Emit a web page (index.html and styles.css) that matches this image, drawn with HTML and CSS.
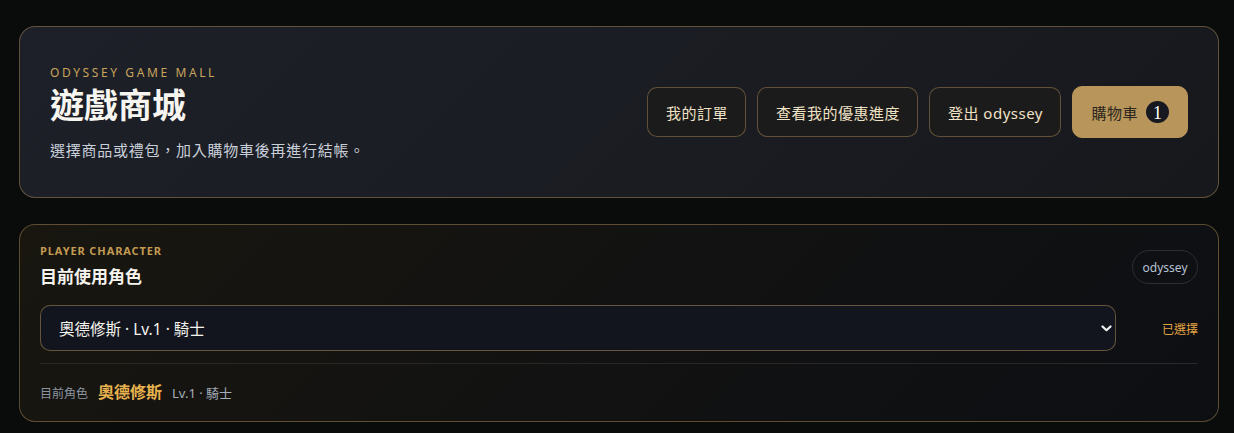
FILE: index.html
```html
<!DOCTYPE html>
<html lang="zh-Hant">
<head>
<meta charset="utf-8">
<title>遊戲商城</title>
<link rel="stylesheet" href="styles.css">
</head>
<body>
<main class="page">
  <header class="hero">
    <div class="hero-text">
      <div class="eyebrow">ODYSSEY GAME MALL</div>
      <h1 class="title">遊戲商城</h1>
      <p class="subtitle">選擇商品或禮包，加入購物車後再進行結帳。</p>
    </div>
    <nav class="actions">
      <button class="btn">我的訂單</button>
      <button class="btn">查看我的優惠進度</button>
      <button class="btn">登出 odyssey</button>
      <button class="btn btn-cart">購物車 <span class="badge">1</span></button>
    </nav>
  </header>

  <section class="char-card">
    <div class="char-head">
      <div>
        <div class="label">PLAYER CHARACTER</div>
        <h2 class="char-title">目前使用角色</h2>
      </div>
      <span class="pill">odyssey</span>
    </div>
    <div class="select-row">
      <div class="select-box">
        <span class="select-text">奧德修斯 · Lv.1 · 騎士</span>
        <svg class="chev" width="11" height="7" viewBox="0 0 11 7"><path d="M1.5 1.5 L5.5 5.2 L9.5 1.5" fill="none" stroke="#f2f2f2" stroke-width="2.2" stroke-linecap="round" stroke-linejoin="round"/></svg>
      </div>
      <span class="selected">已選擇</span>
    </div>
    <div class="current">
      <span class="cur-label">目前角色</span>
      <span class="cur-name">奧德修斯</span>
      <span class="cur-meta">Lv.1 · 騎士</span>
    </div>
  </section>
</main>
</body>
</html>
```
FILE: styles.css
```css
* { box-sizing: border-box; }
html, body { margin: 0; padding: 0; }
body {
  background: #0a0b0b;
  font-family: "Noto Sans", "Noto Sans CJK TC", sans-serif;
  color: #f3f1ec;
}
.page {
  padding: 26px 15px 0 19px;
  display: flex;
  flex-direction: column;
  gap: 26px;
}
.hero {
  height: 172px;
  border: 1px solid rgba(184, 149, 90, 0.45);
  border-radius: 16px;
  background: linear-gradient(135deg, #1d2028 0%, #1a1c22 60%, #17181c 100%);
  padding: 0 30px;
  display: flex;
  align-items: center;
  justify-content: space-between;
}
.hero-text { padding-top: 1px; }
.eyebrow {
  font-size: 12px;
  letter-spacing: 2.6px;
  color: #c9a45c;
  line-height: 16px;
}
.title {
  margin: 1px 0 0;
  font-family: "Noto Sans CJK TC", sans-serif;
  font-size: 34px;
  font-weight: 700;
  line-height: 44px;
  color: #f7f5f0;
}
.subtitle {
  margin: 14px 0 0;
  font-family: "Noto Sans CJK TC", sans-serif;
  font-size: 15px;
  line-height: 20px;
  color: #c9cfd9;
  letter-spacing: 0.75px;
}
.actions {
  display: flex;
  gap: 11px;
  align-items: center;
}
.btn {
  height: 50px;
  padding: 0 17.5px;
  border: 1px solid rgba(184, 149, 90, 0.45);
  border-radius: 10px;
  background: #1c1b1c;
  color: #f0e2c4;
  font-family: "Noto Sans", "Noto Sans CJK TC", sans-serif;
  font-size: 15px;
  letter-spacing: 0.5px;
  display: flex;
  align-items: center;
  gap: 8px;
}
.btn-cart {
  height: 52px;
  background: #b8955a;
  border-color: #b8955a;
  color: #2a2620;
  padding: 0 18px 0 18px;
}
.badge {
  width: 23px;
  height: 22px;
  border-radius: 50%;
  background: #171820;
  color: #ffffff;
  font-family: "Liberation Serif", serif;
  font-size: 18px;
  font-weight: 400;
  letter-spacing: 0;
  display: inline-flex;
  align-items: center;
  justify-content: center;
  line-height: 1;
  padding-top: 1px;
}
.char-card {
  border: 1px solid rgba(184, 149, 90, 0.45);
  border-radius: 16px;
  background: linear-gradient(135deg, #18160f 0%, #121212 50%, #0d0f13 100%);
  padding: 19px 20px 20px 20px;
  height: 198px;
}
.char-head {
  display: flex;
  justify-content: space-between;
  align-items: center;
}
.label {
  font-size: 11px;
  font-weight: 700;
  letter-spacing: 0.9px;
  color: #c39b52;
  line-height: 14px;
}
.char-title {
  margin: 7px 0 0;
  font-family: "Noto Sans CJK TC", sans-serif;
  font-size: 17px;
  font-weight: 700;
  line-height: 22px;
  color: #f5f3ee;
}
.pill {
  height: 34px;
  padding: 0 9.5px;
  border: 1px solid #2c2e32;
  border-radius: 17px;
  font-size: 12px;
  color: #b6c2d4;
  display: flex;
  align-items: center;
  margin-top: 3px;
}
.select-row {
  margin-top: 18px;
  display: flex;
  align-items: center;
}
.select-box {
  flex: 1;
  height: 46px;
  background: #12151e;
  border: 1px solid rgba(184, 149, 90, 0.5);
  border-radius: 10px;
  padding: 0 3px 0 18px;
  display: flex;
  align-items: center;
  justify-content: space-between;
}
.select-text {
  font-size: 15.5px;
  color: #f5f3ee;
}
.chev { margin-top: 1px; }
.selected {
  width: 82px;
  text-align: right;
  font-family: "Noto Sans CJK TC", sans-serif;
  font-size: 12px;
  color: #e3a443;
}
.current {
  margin-top: 12px;
  border-top: 1px solid #2a2825;
  padding-top: 15px;
  display: flex;
  align-items: baseline;
  gap: 10px;
}
.cur-label {
  font-family: "Noto Sans CJK TC", sans-serif;
  font-size: 12px;
  color: #8b94a1;
}
.cur-name {
  font-family: "Noto Sans CJK TC", sans-serif;
  font-size: 16px;
  font-weight: 700;
  color: #e8b24f;
}
.cur-meta {
  font-size: 13px;
  color: #a3acb9;
}
```
